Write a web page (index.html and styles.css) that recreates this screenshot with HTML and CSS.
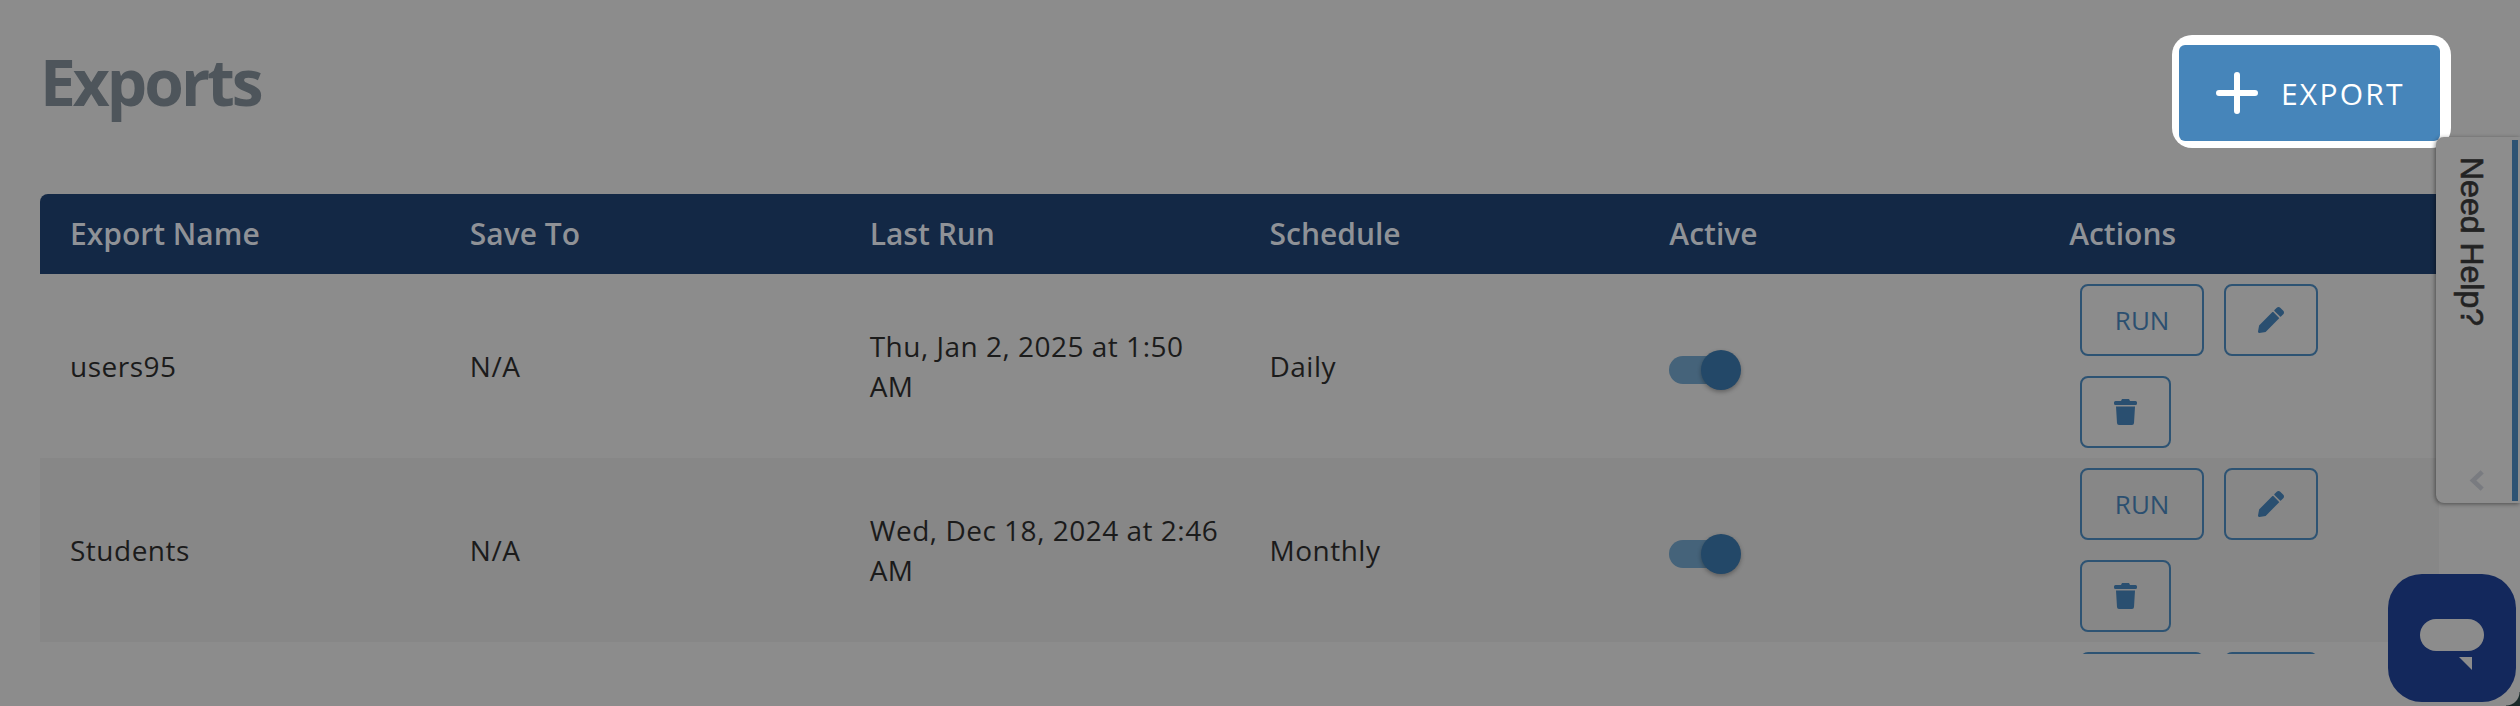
FILE: index.html
```html
<!DOCTYPE html>
<html lang="en">
<head>
    <meta charset="UTF-8">
    <title>Exports</title>
    <link rel="stylesheet" href="styles.css">
</head>
<body>
    <div class="page">
        <div class="page-head">
            <h1>Exports</h1>
            <div class="tour-highlight">
                <button class="export-button">
                    <svg class="plus-icon" viewBox="0 0 42 42"><path d="M21 3v36M3 21h36"/></svg>
                    EXPORT
                </button>
            </div>
        </div>

        <div class="table-wrap">
            <table class="exports">
                <thead>
                    <tr>
                        <th>Export Name</th>
                        <th>Save To</th>
                        <th>Last Run</th>
                        <th>Schedule</th>
                        <th>Active</th>
                        <th>Actions</th>
                    </tr>
                </thead>
                <tbody>
                    <tr>
                        <td>users95</td>
                        <td>N/A</td>
                        <td>Thu, Jan 2, 2025 at 1:50 AM</td>
                        <td>Daily</td>
                        <td><span class="switch"><span class="switch-thumb"></span></span></td>
                        <td class="actions">
                            <div class="action-group">
                                <button class="action-button run">RUN</button>
                                <button class="action-button edit">
                                    <svg class="edit-icon" viewBox="0 0 512 512"><path d="M497.9 142.1l-46.1 46.1c-4.7 4.7-12.3 4.7-17 0l-111-111c-4.7-4.7-4.7-12.3 0-17l46.1-46.1c18.7-18.7 49.1-18.7 67.9 0l60.1 60.1c18.8 18.7 18.8 49.1 0 67.9zM284.2 99.8L21.6 362.4.4 483.9c-2.9 16.4 11.4 30.6 27.8 27.8l121.5-21.3 262.6-262.6c4.7-4.7 4.7-12.3 0-17l-111-111c-4.8-4.7-12.4-4.7-17.1 0z"/></svg>
                                </button>
                                <button class="action-button remove">
                                    <svg class="trash-icon" viewBox="0 0 23 26"><path d="M8 0h7l1 2h5.500q1.500 0 1.500 1.500v1q0 1.500-1.500 1.500h-20q-1.500 0-1.500-1.500v-1q0-1.500 1.500-1.500h5.500zM2 7.500h19l-1 16.500q-.1 2-2 2h-13q-1.900 0-2-2z"/></svg>
                                </button>
                            </div>
                        </td>
                    </tr>
                    <tr>
                        <td>Students</td>
                        <td>N/A</td>
                        <td>Wed, Dec 18, 2024 at 2:46 AM</td>
                        <td>Monthly</td>
                        <td><span class="switch"><span class="switch-thumb"></span></span></td>
                        <td class="actions">
                            <div class="action-group">
                                <button class="action-button run">RUN</button>
                                <button class="action-button edit">
                                    <svg class="edit-icon" viewBox="0 0 512 512"><path d="M497.9 142.1l-46.1 46.1c-4.7 4.7-12.3 4.7-17 0l-111-111c-4.7-4.7-4.7-12.3 0-17l46.1-46.1c18.7-18.7 49.1-18.7 67.9 0l60.1 60.1c18.8 18.7 18.8 49.1 0 67.9zM284.2 99.8L21.6 362.4.4 483.9c-2.9 16.4 11.4 30.6 27.8 27.8l121.5-21.3 262.6-262.6c4.7-4.7 4.7-12.3 0-17l-111-111c-4.8-4.7-12.4-4.7-17.1 0z"/></svg>
                                </button>
                                <button class="action-button remove">
                                    <svg class="trash-icon" viewBox="0 0 23 26"><path d="M8 0h7l1 2h5.500q1.500 0 1.500 1.500v1q0 1.500-1.500 1.500h-20q-1.500 0-1.500-1.500v-1q0-1.500 1.500-1.500h5.500zM2 7.500h19l-1 16.500q-.1 2-2 2h-13q-1.900 0-2-2z"/></svg>
                                </button>
                            </div>
                        </td>
                    </tr>
                    <tr>
                        <td></td>
                        <td></td>
                        <td></td>
                        <td></td>
                        <td></td>
                        <td class="actions">
                            <div class="action-group">
                                <button class="action-button run"></button>
                                <button class="action-button edit"></button>
                            </div>
                        </td>
                    </tr>
                </tbody>
            </table>
        </div>
    </div>

    <!-- Help tab on the right edge -->
    <aside class="help-tab">
        <span class="help-label">Need Help?</span>
        <svg class="help-chevron" viewBox="0 0 14 20"><path d="M11.500 2.500L3.500 10l8 7.500"/></svg>
    </aside>

    <!-- Chat launcher -->
    <div class="chat-launcher">
        <span class="chat-bubble"></span>
        <span class="chat-tail"></span>
    </div>
    <div class="screen-corner"></div>
</body>
</html>
```

FILE: styles.css
```css
/* General */
html, body {
    height: 100%;
}
body {
    margin: 0;
    overflow: hidden;
    position: relative;
    background-color: #8c8c8c;
    font-family: "Open Sans", sans-serif;
    font-size: 28px;
    color: #1b1b1b;
}
.page {
    padding: 35px 81px 0 40px;
}
.page-head {
    display: flex;
    justify-content: space-between;
    align-items: flex-start;
}
h1 {
    margin: 9px 0 0;
    font-size: 64px;
    font-weight: 700;
    line-height: 76px;
    letter-spacing: -3px;
    color: #4e555b;
}

/* Export button with the white tour outline */
.tour-highlight {
    padding: 10px 11px 7px 7px;
    margin-right: -12px;
    background-color: #fff;
    border-radius: 20px;
}
.export-button {
    display: flex;
    align-items: center;
    gap: 23px;
    width: 261px;
    height: 96px;
    padding: 0 0 0 37px;
    border: none;
    border-radius: 6px;
    background-color: #4685ba;
    color: #fff;
    font-family: inherit;
    font-size: 30px;
    font-weight: 500;
    letter-spacing: 2.2px;
}
.plus-icon {
    width: 42px;
    height: 42px;
    fill: none;
    stroke: #fff;
    stroke-width: 6;
    stroke-linecap: round;
}

/* Table */
.table-wrap {
    height: 460px;
    margin-top: 46px;
    overflow: hidden;
}
.exports {
    width: 100%;
    table-layout: fixed;
    border-collapse: collapse;
}
.exports th {
    height: 78px;
    padding: 0 30px 2px;
    background-color: #132845;
    color: #8f9297;
    font-size: 30px;
    font-weight: 600;
    text-align: left;
}
.exports th:first-child {
    border-top-left-radius: 8px;
}
.exports td {
    padding: 0 20px 0 30px;
    line-height: 40px;
    letter-spacing: 0.5px;
}
.exports tbody tr:nth-child(even) {
    background-color: #878787;
}
.exports td.actions {
    padding: 10px 30px 10px 41px;
}

/* Switch */
.switch {
    display: block;
    position: relative;
    width: 60px;
    height: 28px;
    margin-top: 8px;
    border-radius: 14px;
    background-color: #45637a;
}
.switch-thumb {
    position: absolute;
    top: -6px;
    left: 32px;
    width: 40px;
    height: 40px;
    border-radius: 50%;
    background-color: #234868;
    box-shadow: 0 2px 4px rgba(0, 0, 0, 0.3);
}

/* Row action buttons */
.action-group {
    display: flex;
    flex-wrap: wrap;
    gap: 20px;
    width: 260px;
}
.action-button {
    display: flex;
    align-items: center;
    justify-content: center;
    height: 72px;
    padding: 0;
    border: 2px solid #2d5373;
    border-radius: 8px;
    background: none;
    color: #2b4f70;
    font-family: inherit;
    font-size: 26px;
}
.run {
    width: 124px;
}
.edit {
    width: 94px;
}
.remove {
    width: 91px;
}
.edit-icon {
    width: 26px;
    height: 26px;
    fill: #2a4f70;
}
.trash-icon {
    width: 23px;
    height: 26px;
    fill: #2a4f70;
}

/* Help tab */
.help-tab {
    position: absolute;
    top: 137px;
    left: 2436px;
    width: 84px;
    height: 366px;
    box-sizing: border-box;
    background-color: #8d8d8d;
    border-radius: 8px 0 0 8px;
    box-shadow: -1px 1px 4px rgba(0, 0, 0, 0.45);
}
.help-tab::after {
    content: "";
    position: absolute;
    top: 3px;
    bottom: 2px;
    left: 76px;
    width: 6px;
    background-color: #2d5373;
}
.help-label {
    position: absolute;
    top: 20px;
    left: 16px;
    writing-mode: vertical-rl;
    font-family: "Liberation Sans", Arial, sans-serif;
    font-size: 32px;
    line-height: 40px;
    color: #222;
    -webkit-text-stroke: 0.6px #222;
}
.help-chevron {
    position: absolute;
    left: 33px;
    top: 332px;
    width: 16px;
    height: 23px;
    fill: none;
    stroke: #797b80;
    stroke-width: 4;
}

/* Chat launcher */
.chat-launcher {
    position: absolute;
    top: 574px;
    left: 2388px;
    width: 128px;
    height: 128px;
    border-radius: 34px;
    background-color: #13285c;
}
.chat-bubble {
    position: absolute;
    top: 45px;
    left: 32px;
    width: 64px;
    height: 32px;
    border-radius: 16px;
    background-color: #8c8c8c;
}
.chat-tail {
    position: absolute;
    top: 83px;
    left: 71px;
    width: 13px;
    height: 13px;
    background-color: #8c8c8c;
    clip-path: polygon(0 0, 100% 0, 100% 100%);
}
.screen-corner {
    position: absolute;
    right: 0;
    bottom: 0;
    width: 14px;
    height: 14px;
    background: radial-gradient(circle at 0 0, transparent 13px, #1b2a2a 14px);
}
```
